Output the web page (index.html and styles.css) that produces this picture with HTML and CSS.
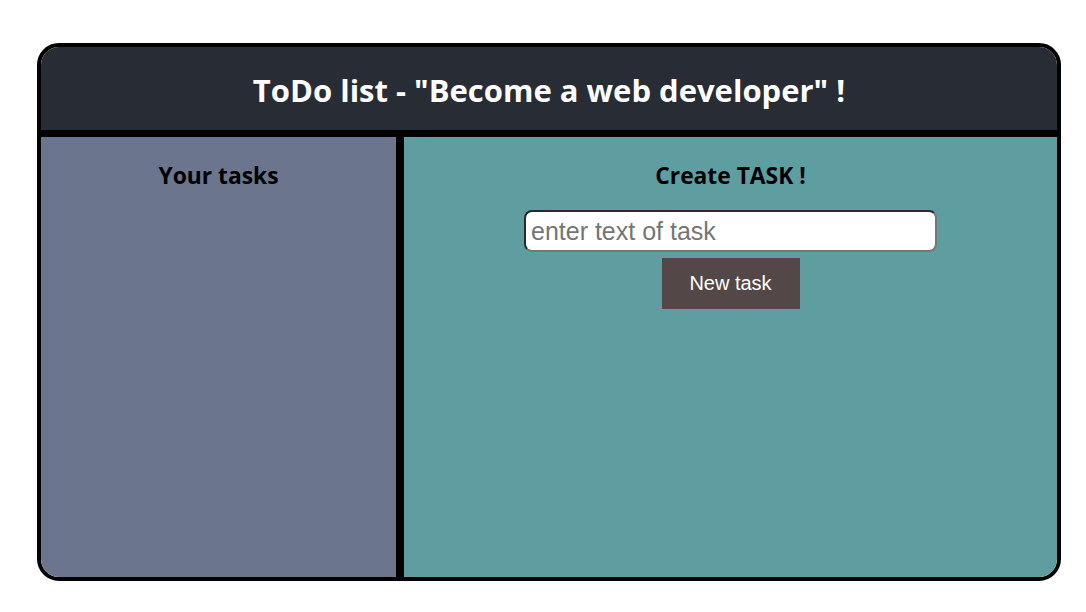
FILE: index.html
```html
<!DOCTYPE html>
<html lang="en">
<head>
<meta charset="utf-8">
<title>ToDo list</title>
<link rel="stylesheet" href="styles.css">
</head>
<body>
<div class="app">
  <header class="app-header">
    <h1 class="title">ToDo list - "Become a web developer" !</h1>
  </header>
  <main class="app-body">
    <section class="tasks">
      <h2 class="section-title">Your tasks</h2>
    </section>
    <section class="create">
      <h2 class="section-title">Create TASK !</h2>
      <input class="task-input" type="text" placeholder="enter text of task">
      <button class="task-btn" type="button">New task</button>
    </section>
  </main>
</div>
</body>
</html>
```

FILE: styles.css
```css
html, body {
  margin: 0;
  padding: 0;
  background: #ffffff;
}
body {
  padding: 43px 25px 31px 37px;
  font-family: "Open Sans", "Noto Sans", sans-serif;
}
.app {
  width: 1024px;
  height: 538px;
  box-sizing: border-box;
  border: 4px solid #000;
  border-radius: 22px;
  overflow: hidden;
  display: flex;
  flex-direction: column;
}
.app-header {
  background: #282c34;
  height: 83px;
  border-bottom: 7px solid #000;
  display: flex;
  align-items: center;
  justify-content: center;
  flex: none;
}
.title {
  margin: 0;
  color: #fff;
  font-size: 31px;
  font-weight: 700;
  line-height: 40px;
  padding-top: 2px;
}
.app-body {
  flex: 1;
  display: flex;
}
.tasks {
  width: 355px;
  background: #6b758e;
  border-right: 8px solid #000;
  flex: none;
}
.create {
  flex: 1;
  background: #5f9ea0;
  display: flex;
  flex-direction: column;
  align-items: center;
}
.section-title {
  margin: 25px 0 0;
  text-align: center;
  font-size: 22.8px;
  font-weight: 700;
  color: #000;
  line-height: 28px;
}
.task-input {
  margin-top: 20px;
  width: 413px;
  height: 42px;
  box-sizing: border-box;
  border: 2px solid #2a2a2a;
  border-right-color: #767676;
  border-bottom-color: #767676;
  border-radius: 8px;
  padding: 0 5px;
  font-family: "Liberation Sans", Arial, sans-serif;
  font-size: 25px;
  background: #fff;
}
.task-input::placeholder {
  color: #757575;
}
.task-btn {
  margin-top: 6px;
  width: 138px;
  height: 51px;
  border: none;
  background: #534847;
  color: #fff;
  font-family: "Liberation Sans", Arial, sans-serif;
  font-size: 20px;
  padding: 0;
}
```
